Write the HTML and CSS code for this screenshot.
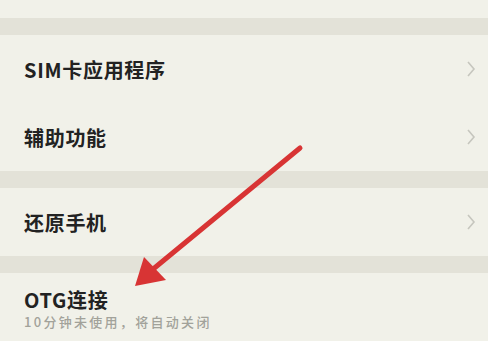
FILE: index.html
```html
<!DOCTYPE html>
<html lang="zh-CN">
<head>
    <meta charset="UTF-8">
    <meta name="viewport" content="width=device-width, initial-scale=1.0">
    <title>更多设置</title>
    <link rel="stylesheet" href="styles.css">
</head>
<body>
    <div class="top-space"></div>
    <div class="band"></div>

    <div class="group">
        <div class="row">
            <span class="title">SIM卡应用程序</span>
            <svg class="chevron" width="10" height="18" viewBox="0 0 10 18"><polyline points="2,2 8,9 2,16" fill="none" stroke="#c6c6be" stroke-width="1.6"/></svg>
        </div>
        <div class="row">
            <span class="title">辅助功能</span>
            <svg class="chevron" width="10" height="18" viewBox="0 0 10 18"><polyline points="2,2 8,9 2,16" fill="none" stroke="#c6c6be" stroke-width="1.6"/></svg>
        </div>
    </div>

    <div class="band"></div>

    <div class="group">
        <div class="row">
            <span class="title">还原手机</span>
            <svg class="chevron" width="10" height="18" viewBox="0 0 10 18"><polyline points="2,2 8,9 2,16" fill="none" stroke="#c6c6be" stroke-width="1.6"/></svg>
        </div>
    </div>

    <div class="band"></div>

    <div class="group">
        <div class="row row-sub">
            <span class="title">OTG连接</span>
            <span class="subtitle">10分钟未使用，将自动关闭</span>
        </div>
    </div>

    <!-- red arrow pointing at OTG -->
    <svg class="arrow" width="488" height="341" viewBox="0 0 488 341">
        <line x1="300" y1="148" x2="152" y2="270" stroke="#d83434" stroke-width="5" stroke-linecap="round"/>
        <polygon points="135,286 144,257 166,280" fill="#d83434"/>
    </svg>
</body>
</html>
```

FILE: styles.css
```css
body {
    margin: 0;
    background-color: #f1f1e9;
    font-family: "Noto Sans CJK SC", "Noto Sans", sans-serif;
    color: #222;
    position: relative;
    overflow: hidden;
    height: 341px;
}
.top-space {
    height: 18px;
}
.band {
    height: 17px;
    background-color: #e3e2d8;
}
.row {
    height: 68px;
    padding: 0 12px 0 24px;
    display: flex;
    align-items: center;
    justify-content: space-between;
}
.title {
    font-size: 20px;
    font-weight: bold;
    letter-spacing: 0.7px;
}
.row-sub {
    flex-direction: column;
    align-items: flex-start;
    justify-content: flex-start;
    padding-top: 13px;
}
.row-sub .title {
    line-height: 28px;
}
.subtitle {
    font-size: 13px;
    font-weight: 500;
    color: #a2a29a;
    letter-spacing: 2.3px;
    line-height: 16px;
}
.arrow {
    position: absolute;
    left: 0;
    top: 0;
}
```
